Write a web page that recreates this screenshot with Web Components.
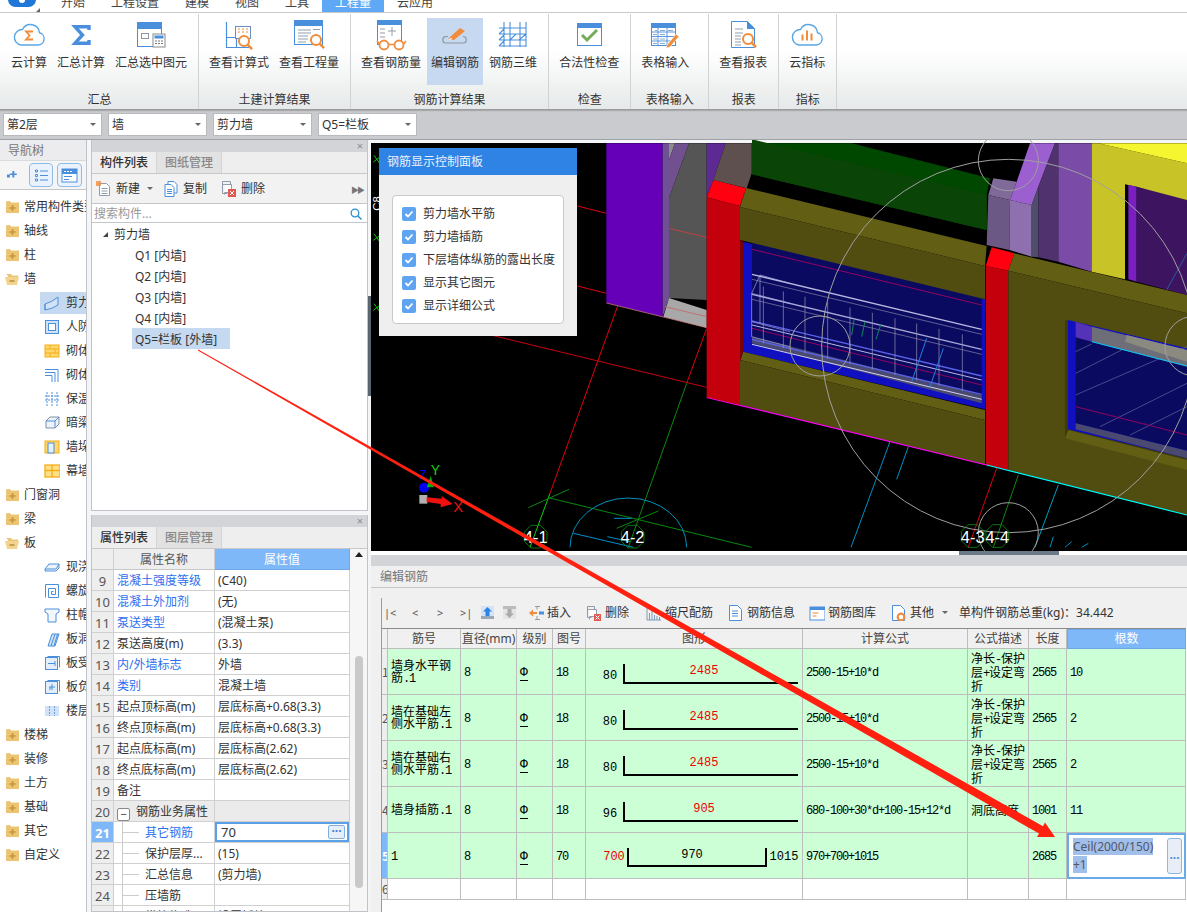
<!DOCTYPE html>
<html lang="zh">
<head>
<meta charset="utf-8">
<title>钢筋编辑</title>
<style>
html, body { margin: 0; height: 100%; overflow: hidden; background: #f4f5f6; }
body { font: 12px/16px "Noto Sans", "Noto Sans CJK SC", sans-serif; color: #333; }
</style>
</head>
<body>
<gtj-app></gtj-app>
<red-arrow></red-arrow>
<script>
const BLUE = "#4a8fdc";
const ORANGE = "#f08c3c";
const magnifier = (x, y) => `<circle cx="${x}" cy="${y}" r="5" fill="#fff" stroke="${ORANGE}" stroke-width="2"/><path d="M${x + 3.6} ${y + 3.6}l4.5 4.5" stroke="${ORANGE}" stroke-width="2.6"/>`;
const titled = (x, y, w, h, bar) => `<rect x="${x + .5}" y="${y + .5}" width="${w - 1}" height="${h - 1}" fill="#fff" stroke="${BLUE}"/><rect x="${x}" y="${y}" width="${w}" height="${bar}" fill="${BLUE}"/>`;

// 功能区图标 (36x36)
const ribbonIcons = {
  cloudSum: `<path d="M10 27h17a6.2 6.2 0 0 0 1.5-12.2A9 9 0 0 0 11.5 11.5 7.8 7.8 0 0 0 10 27z" fill="#fff" stroke="#5aa7e6" stroke-width="1.4"/><path d="M22 13.5h-7l3.6 4-3.6 4h7" fill="none" stroke="${ORANGE}" stroke-width="1.8"/>`,
  sum: `<path d="M26 12V8.8H12l7.5 8.2-7.5 8.2h14V22" fill="none" stroke="${BLUE}" stroke-width="3.4"/>`,
  sumSel: `${titled(4, 4, 25, 25, 7)}<rect x="8.500" y="15.500" width="7" height="5" fill="none" stroke="#8a97a8"/><rect x="20" y="16" width="12" height="13" fill="#fff" stroke="#8a8a8a"/><rect x="21.500" y="17.500" width="9" height="3" fill="${BLUE}"/><path d="M22 23h2m1 0h2m1 0h2M22 25.500h2m1 0h2m1 0h2" stroke="#777"/>`,
  viewCalc: `<path d="M5.500 4v25.500h23M5.500 19.500h10v10" fill="none" stroke="${BLUE}" stroke-width="1.2"/><rect x="14.500" y="8.500" width="15" height="12" fill="#fff" stroke="#6a8fc0"/><path d="M17 11h2m2 0h2m2 0h2M17 14h2m2 0h2m2 0h2" stroke="${ORANGE}"/>${magnifier(23, 23)}`,
  viewQty: `${titled(3, 2, 29, 25, 6)}<path d="M7 12h13M7 15h13M7 18h10M7 21h10M7 24h8" stroke="#8f9dac"/><rect x="22" y="11" width="7" height="1" fill="#8f9dac"/>${magnifier(25, 22)}`,
  viewRebar: `${titled(4, 2, 25, 25, 5)}<path d="M7 11h5M7 15h5M7 19h5M15 13h8M19 9v9" stroke="#8f9dac"/><circle cx="11" cy="27" r="4.500" fill="#fff" stroke="${ORANGE}" stroke-width="1.8"/><circle cx="26" cy="27" r="4.500" fill="#fff" stroke="${ORANGE}" stroke-width="1.8"/><path d="M15.500 26.500h6M6.500 26l-2.500-3M30.500 26l2.500-3" stroke="${ORANGE}" stroke-width="1.6" fill="none"/>`,
  editRebar: `<path d="M11 18.500H9a3 3 0 0 0 0 6.500h17a3 3 0 0 0 0-6.500" fill="none" stroke="#8e959c" stroke-width="1.2"/><path d="M11 21l12-11 5 3-11 9z" fill="${ORANGE}"/><path d="M12 21.500l3-1" stroke="#fff"/>`,
  rebar3d: `<path d="M9 4v25M15 4v25M25 4v25M31 4v25M4 10h27M4 16h5M4 22h27M4 28h27M4 16l6-6M4 22l6-6M4 28l6-6M9 16h22M15 22l6-6M24 22l7-6" fill="none" stroke="${BLUE}" stroke-width="1.1"/>`,
  check: `${titled(6, 5, 25, 23, 5)}<path d="M11 17l5 5 10-10" fill="none" stroke="#74ac58" stroke-width="3"/>`,
  tableInput: `${titled(4, 5, 25, 23, 5)}<path d="M4 14h25M4 18.500h25M4 23h25M11 10v18M20 10v18" stroke="${BLUE}" stroke-width=".9"/><path d="M8 12.500h2m3 0h5m3 0h5M6 16.500h4m3 0h5M6 21h4m3 0h5M6 25.500h4m3 0h5" stroke="#8fa9c8"/><path d="M20 27l9-11 3 2.400-9 10.600-4 1z" fill="${ORANGE}" stroke="#fff" stroke-width=".6"/>`,
  report: `<path d="M6.500 3.500h16l7 7v19h-23z" fill="#fff" stroke="${BLUE}"/><path d="M22 3v8h8z" fill="${BLUE}"/><path d="M10 11h8M10 15h8M10 18h6M10 21h6M10 24h6M10 27h6" stroke="#8f9dac"/>${magnifier(23, 21)}`,
  cloudBars: `<path d="M10 27h17a6.2 6.2 0 0 0 1.500-12.200A9 9 0 0 0 11.500 11.500 7.800 7.800 0 0 0 10 27z" fill="#fff" stroke="#5aa7e6" stroke-width="1.4"/><path d="M13.500 22.500v-6M18 22.500v-10M22.500 22.500v-7" stroke="${ORANGE}" stroke-width="2"/>`,
};

// 导航树图标 (16x16)
const folder = (open) => `<svg width="15" height="14" viewBox="0 0 15 14"><path d="${open ? "M1 2h5l1 1.500h6V6H4L1 1z" : "M1 2.500Q1 1 2 1h3l1 1.500h8V13H1z"}" fill="#ecc476"/>${open ? `<path d="M0 5h14l-2 8H2z" fill="#f3d48e"/><path d="M4.500 9h5" stroke="#b88d3a" stroke-width="1.500"/>` : `<path d="M7.500 5v6M4.500 8h6" stroke="#c89436" stroke-width="1.600"/>`}</svg>`;
const navIcons = {
  wall: `<path d="M1 9Q8 7 14 2v8Q8 14 1 15z" fill="#d2e3f7" stroke="${BLUE}"/><path d="M1 9v6" stroke="${BLUE}"/>`,
  frame: `<rect x="1.500" y="1.500" width="13" height="13" fill="#cfe2f7" stroke="${BLUE}"/><rect x="4.500" y="4.500" width="7" height="7" fill="#fff" stroke="${BLUE}"/>`,
  brick: `<rect x="1" y="2" width="14" height="12" fill="#ffd76e" stroke="#f5ad14"/><path d="M1 6h14M1 10h14M6 2v4M11 6v4M6 10v4" stroke="#f5ad14"/>`,
  corner: `<path d="M1 2.500h13V15M1 5.500h10V15M1 8.500h7V15" fill="none" stroke="${BLUE}"/>`,
  insul: `<path d="M3 1v14M8 1v14M13 1v14M1 5h14M1 9h14" stroke="${BLUE}" stroke-dasharray="2 1"/>`,
  beam: `<path d="M2 6l4-4h9v7l-4 4H2z" fill="#eef3f9" stroke="#7f8fa5"/><path d="M2 6h9l4-4M11 6v7" fill="none" stroke="${BLUE}"/>`,
  pier: `<rect x="1" y="2" width="14" height="12" fill="#ffd76e" stroke="#f5ad14"/><rect x="4" y="4" width="6" height="10" fill="#e6f0fb" stroke="${BLUE}"/>`,
  curtain: `<rect x="1" y="2" width="15" height="12" fill="#ffe08a" stroke="#f5ad14" stroke-width="1.300"/><path d="M1 7.500h15M8 2v12" stroke="#f5ad14" stroke-width="1.300"/>`,
  slab: `<path d="M1 10l4-5h10v4l-3 3H1z" fill="#eef3f9" stroke="${BLUE}"/><path d="M1 10h11l3-5" fill="none" stroke="${BLUE}"/>`,
  spiral: `<path d="M1.500 14.500v-13h13v13H4.500v-9h7v6H7.500v-3h2" fill="none" stroke="${BLUE}"/>`,
  cap: `<path d="M1 2h14v3l-3 2v8H4V7L1 5z" fill="#f2f7fc" stroke="${BLUE}"/>`,
  hole: `<path d="M4 15L8 3h7l-4 12zM7 15l4-12M10 15l3.500-12" fill="#cfe2f7" stroke="${BLUE}"/>`,
  slabBar: `<rect x="1.500" y="2.500" width="12" height="12" fill="#e3eefa" stroke="${BLUE}"/><path d="M3.500 1.500h12v11M4 8.500h7M11 6v5" fill="none" stroke="${BLUE}"/>`,
  slabNeg: `<rect x="1.500" y="2.500" width="12" height="12" fill="#e3eefa" stroke="${BLUE}"/><path d="M3.500 1.500h12v11M5 8h6M8 5v6M6 11V8" fill="none" stroke="${BLUE}"/>`,
  strip: `<rect x="1" y="3" width="14" height="10" fill="#cfe2f7"/><path d="M5.500 3v10M10.500 3v10" stroke="#6fa1d8" stroke-dasharray="2 1"/>`,
};

class RibbonItem extends HTMLElement {
  connectedCallback() {
    this.attachShadow({ mode: "open" });
    this.shadowRoot.innerHTML = `<style>
:host { display: flex; flex-direction: column; align-items: center; padding: 0 4px; margin: 0 1px; height: 67px; }
:host([active]) { background: #c7d9f0; }
svg { width: 36px; height: 36px; display: block; overflow: visible; flex: none; }
span { line-height: 16px; white-space: nowrap; color: #333; margin-top: 1px; }
</style><svg viewBox="0 0 36 36">${ribbonIcons[this.getAttribute("icon")]}</svg><span>${this.getAttribute("label")}</span>`;
  }
}

class RibbonGroup extends HTMLElement {
  connectedCallback() {
    this.attachShadow({ mode: "open" });
    this.shadowRoot.innerHTML = `<style>
:host { display: flex; flex-direction: column; align-items: stretch; box-sizing: content-box; padding: 0 6px 0 5px; border-right: 1px solid #d0d3d6; height: 95px; margin-top: 1px; }
.items { display: flex; padding-top: 4px; }
.label { text-align: center; line-height: 16px; margin-top: 7px; color: #333; margin-left: -5px; margin-right: -6px; }
</style><div class="items"><slot></slot></div><div class="label">${this.getAttribute("label")}</div>`;
  }
}

class AppRibbon extends HTMLElement {
  connectedCallback() {
    this.attachShadow({ mode: "open" });
    const tabs = ["开始", "工程设置", "建模", "视图", "工具", "工程量", "云应用"];
    this.shadowRoot.innerHTML = `<style>
:host { display: block; }
.tabs { display: flex; height: 12px; border-bottom: 1px solid #c8cacc; overflow: hidden; background: #fff; padding-left: 48px; position: relative; }
.tab { padding: 0 13px; line-height: 6px; height: 12px; color: #444; }
.tab.on { background: #5ea8f5; color: #fff; }
.logo { position: absolute; left: 8px; top: -8px; width: 28px; height: 15px; background: #1f78d8; border-radius: 8px; }
.logo::after { content: ""; position: absolute; left: 11px; top: 5px; width: 6px; height: 6px; border-radius: 3px; background: #fff; }
.corner { position: absolute; left: 36px; top: 8px; border: 2px solid transparent; border-right-color: #666; border-bottom-color: #666; }
.mask { position: absolute; left: 0; top: 0; width: 45px; height: 13px; background: #fff; }
.bar { display: flex; height: 97px; box-sizing: border-box; background: linear-gradient(#fff 40%, #e6e9e9); border-bottom: 1px solid #9a9c9e; box-shadow: 0 1px 1px #aaa; position: relative; }
</style>
<div class="tabs"><div class="mask"></div><div class="logo"></div><div class="corner"></div>${tabs.map((t) => `<div class="tab${t === "工程量" ? " on" : ""}">${t}</div>`).join("")}</div>
<div class="bar">
  <ribbon-group label="汇总" style="padding-left:6px">
    <ribbon-item icon="cloudSum" label="云计算"></ribbon-item>
    <ribbon-item icon="sum" label="汇总计算"></ribbon-item>
    <ribbon-item icon="sumSel" label="汇总选中图元"></ribbon-item>
  </ribbon-group>
  <ribbon-group label="土建计算结果">
    <ribbon-item icon="viewCalc" label="查看计算式"></ribbon-item>
    <ribbon-item icon="viewQty" label="查看工程量"></ribbon-item>
  </ribbon-group>
  <ribbon-group label="钢筋计算结果">
    <ribbon-item icon="viewRebar" label="查看钢筋量"></ribbon-item>
    <ribbon-item icon="editRebar" label="编辑钢筋" active></ribbon-item>
    <ribbon-item icon="rebar3d" label="钢筋三维"></ribbon-item>
  </ribbon-group>
  <ribbon-group label="检查">
    <ribbon-item icon="check" label="合法性检查"></ribbon-item>
  </ribbon-group>
  <ribbon-group label="表格输入" style="width:66px">
    <ribbon-item icon="tableInput" label="表格输入"></ribbon-item>
  </ribbon-group>
  <ribbon-group label="报表">
    <ribbon-item icon="report" label="查看报表"></ribbon-item>
  </ribbon-group>
  <ribbon-group label="指标">
    <ribbon-item icon="cloudBars" label="云指标"></ribbon-item>
  </ribbon-group>
</div>`;
  }
}

class FloorSelect extends HTMLElement {
  connectedCallback() {
    this.attachShadow({ mode: "open" });
    this.shadowRoot.innerHTML = `<style>
:host { display: flex; align-items: center; justify-content: space-between; box-sizing: border-box; width: 99px; height: 23px; background: #fff; border: 1px solid #b8babd; padding: 0 5px 0 3px; font-size: 12px; color: #333; }
i { width: 0; height: 0; border: 3.500px solid transparent; border-top: 3.500px solid #666; border-bottom: 0; }
</style><slot></slot><i></i>`;
  }
}

class SelectBar extends HTMLElement {
  connectedCallback() {
    this.attachShadow({ mode: "open" });
    this.shadowRoot.innerHTML = `<style>
:host { display: flex; gap: 6px; height: 30px; box-sizing: border-box; padding: 3px 0 0 3px; background: #c9cbcf; border-bottom: 1px solid #9ea1a5; }
</style><floor-select>第2层</floor-select><floor-select>墙</floor-select><floor-select>剪力墙</floor-select><floor-select>Q5=栏板</floor-select>`;
  }
}

class NavTree extends HTMLElement {
  connectedCallback() {
    this.attachShadow({ mode: "open" });
    const rows = [
      [0, "常用构件类型"], [0, "轴线"], [0, "柱"], [1, "墙"],
      [2, "剪力墙", "wall", true], [2, "人防门框墙", "frame"], [2, "砌体墙", "brick"], [2, "砌体加筋", "corner"], [2, "保温墙", "insul"], [2, "暗梁", "beam"], [2, "墙垛", "pier"], [2, "幕墙", "curtain"],
      [0, "门窗洞"], [0, "梁"], [1, "板"],
      [2, "现浇板", "slab"], [2, "螺旋板", "spiral"], [2, "柱帽", "cap"], [2, "板洞", "hole"], [2, "板受力筋", "slabBar"], [2, "板负筋", "slabNeg"], [2, "楼层板带", "strip"],
      [0, "楼梯"], [0, "装修"], [0, "土方"], [0, "基础"], [0, "其它"], [0, "自定义"],
    ];
    const rowHtml = ([kind, text, icon, sel]) => kind === 2
      ? `<div class="row child${sel ? " sel" : ""}"><svg width="16" height="16" viewBox="0 0 16 16">${navIcons[icon]}</svg><span>${text}</span></div>`
      : `<div class="row">${folder(kind === 1)}<span>${text}</span></div>`;
    this.shadowRoot.innerHTML = `<style>
:host { display: flex; flex-direction: column; background: #fff; border-right: 1px solid #c0c4c8; overflow: hidden; }
.head { height: 20px; line-height: 21px; background: #ececee; color: #777; padding-left: 8px; flex: none; }
.tools { height: 30px; box-sizing: border-box; background: #f5f5f6; border-bottom: 1px solid #c4c6c9; border-top: 1px solid #d8dade; display: flex; align-items: center; padding-left: 5px; flex: none; }
.btn { width: 25px; height: 24px; box-sizing: border-box; border: 1px solid #8ebce8; border-radius: 4px; background: #eaf3fd; margin-right: 4px; display: flex; align-items: center; justify-content: center; }
.list { padding-top: 5px; white-space: nowrap; }
.row { height: 24px; display: flex; align-items: center; padding-left: 5px; gap: 4px; }
.row svg { flex: none; }
.child { margin-left: 40px; padding-left: 4px; gap: 6px; }
.sel { background: #c5d9f0; height: 22px; margin-top: 1px; margin-bottom: 1px; }
</style>
<div class="head">导航树</div>
<div class="tools">
  <svg width="12" height="12" viewBox="0 0 12 12" style="margin-right:12px"><path d="M2 5.500h3v3H2zM7.500 2h2v2.500h2.500v1.500h-2.500v2.500h-2v-2.500h-2.500v-1.500h2.500z" fill="${BLUE}"/></svg>
  <div class="btn"><svg width="15" height="15" viewBox="0 0 15 15"><path d="M1.500 2h2v2h-2zM1.500 6.500h2v2h-2zM1.500 11h2v2h-2zM6 3h8M6 7.500h8M6 12h8" fill="none" stroke="${BLUE}"/></svg></div>
  <div class="btn"><svg width="17" height="15" viewBox="0 0 17 15"><rect x="1" y="1" width="15" height="13" fill="#fff" stroke="${BLUE}"/><rect x="1" y="1" width="15" height="5" fill="${BLUE}"/><path d="M3 8.500h8M3 11.500h5" stroke="${BLUE}"/><path d="M3 3.500h2m1 0h2m1 0h2" stroke="#fff"/></svg></div>
</div>
<div class="list">${rows.map(rowHtml).join("")}</div>`;
  }
}

class DockPanel extends HTMLElement {
  connectedCallback() {
    this.attachShadow({ mode: "open" });
    const [on, off] = this.getAttribute("tabs").split(",");
    this.shadowRoot.innerHTML = `<style>
:host { display: flex; flex-direction: column; box-sizing: border-box; border: 1px solid #c0c4c8; border-top: 0; background: #fff; overflow: hidden; }
.strip { height: 12px; background: #d2d4d8; text-align: right; line-height: 11px; padding-right: 4px; color: #8a8c90; font-size: 11px; flex: none; }
.tabs { display: flex; height: 22px; box-sizing: border-box; background: #eeeeee; border-bottom: 1px solid #c8c8c8; flex: none; }
.tab { width: 65px; box-sizing: border-box; text-align: center; line-height: 21px; border-right: 1px solid #d4d4d4; font-weight: 500; color: #333; }
.tab + .tab { background: #e2e2e2; color: #888; }
</style><div class="strip">×</div><div class="tabs"><div class="tab">${on}</div><div class="tab">${off}</div></div><slot></slot>`;
  }
}

class ComponentList extends HTMLElement {
  connectedCallback() {
    this.attachShadow({ mode: "open" });
    const items = ["Q1 [内墙]", "Q2 [内墙]", "Q3 [内墙]", "Q4 [内墙]", "Q5=栏板 [外墙]"];
    this.shadowRoot.innerHTML = `<style>
:host { display: flex; flex-direction: column; flex: 1; min-height: 0; }
.tools { height: 30px; box-sizing: border-box; background: #f2f2f2; border-bottom: 1px solid #c4c6c9; display: flex; align-items: center; padding-left: 4px; position: relative; }
.tool { display: flex; align-items: center; gap: 5px; }
.caret { width: 0; height: 0; border: 3px solid transparent; border-top-color: #666; border-bottom: 0; margin: 0 11px 0 7px; }
.more { position: absolute; right: 4px; top: 8px; color: #777; font-size: 8px; letter-spacing: -2px; }
.search { height: 19px; box-sizing: border-box; border-bottom: 1px solid #c4c6c9; display: flex; align-items: center; justify-content: space-between; padding: 1px 5px 0 2px; color: #999; line-height: 18px; }
.root { height: 21px; box-sizing: border-box; padding: 2px 0 0 11px; display: flex; align-items: center; gap: 6px; }
.root i { width: 0; height: 0; border-left: 5px solid transparent; border-bottom: 5px solid #444; }
.item { height: 21px; line-height: 23px; margin-left: 40px; padding-left: 3px; white-space: nowrap; width: fit-content; padding-right: 10px; }
.item.sel { width: 95px; padding-right: 0; background: #c5d9f0; }
</style>
<div class="tools">
  <span class="tool"><svg width="15" height="16" viewBox="0 0 15 16"><path d="M3.500 2.500h7l3 3v9h-10z" fill="#fff" stroke="#8f9dac"/><path d="M5.500 7.500h6M5.500 10h6M5.500 12.500h6" stroke="#8f9dac"/><path d="M0 0h5v5H0z" fill="${ORANGE}" opacity=".8"/></svg>新建</span><i class="caret"></i>
  <span class="tool" style="margin-right:14px"><svg width="14" height="16" viewBox="0 0 14 16"><path d="M4 .500h6l3 3V12H4z" fill="#fff" stroke="${BLUE}"/><path d="M1 3.500h6l3 3v9H1z" fill="#fff" stroke="${BLUE}"/><path d="M3 8.500h5M3 10.500h5M3 12.500h5" stroke="${BLUE}"/></svg>复制</span>
  <span class="tool"><svg width="15" height="16" viewBox="0 0 15 16"><path d="M1.500 .500h8v3h-8zM1.500 .500v12h5" fill="none" stroke="#8f9dac"/><path d="M3.500 3.500h7v8h-7v2" fill="#fff" stroke="#8f9dac"/><rect x="7" y="8" width="8" height="8" fill="#e05a52"/><path d="M9 10l4 4m0-4l-4 4" stroke="#fff"/></svg>删除</span>
  <span class="more">▶▶</span>
</div>
<div class="search"><span>搜索构件...</span><svg width="12" height="12" viewBox="0 0 12 12"><circle cx="5" cy="5" r="3.800" fill="none" stroke="#2a8fd0" stroke-width="1.300"/><path d="M8 8l3.500 3.500" stroke="#2a8fd0" stroke-width="1.500"/></svg></div>
<div class="tree"><div class="root"><i></i><span>剪力墙</span></div>${items.map((t, i) => `<div class="item${i === 4 ? " sel" : ""}">${t}</div>`).join("")}</div>`;
  }
}

class PropertyTable extends HTMLElement {
  connectedCallback() {
    this.attachShadow({ mode: "open" });
    const rows = [
      [9, "混凝土强度等级", "(C40)", "link"], [10, "混凝土外加剂", "(无)", "link"], [11, "泵送类型", "(混凝土泵)", "link"],
      [12, "泵送高度(m)", "(3.3)"], [13, "内/外墙标志", "外墙", "link"], [14, "类别", "混凝土墙", "link"],
      [15, "起点顶标高(m)", "层底标高+0.68(3.3)"], [16, "终点顶标高(m)", "层底标高+0.68(3.3)"],
      [17, "起点底标高(m)", "层底标高(2.62)"], [18, "终点底标高(m)", "层底标高(2.62)"], [19, "备注", ""],
      [20, "钢筋业务属性", "", "group"], [21, "其它钢筋", "70", "edit"], [22, "保护层厚...", "(15)", "child"],
      [23, "汇总信息", "(剪力墙)", "child"], [24, "压墙筋", "", "child"], [25, "纵筋构造", "设置插筋", "child"],
    ];
    const nameCell = (name, kind) => {
      if (kind === "group") return `<span class="box">−</span>${name}`;
      if (kind === "edit") return `<span class="tee"></span><span class="link">${name}</span>`;
      if (kind === "child") return `<span class="tee"></span>${name}`;
      return kind === "link" ? `<span class="link">${name}</span>` : name;
    };
    const valueCell = (value, kind) => kind === "edit"
      ? `<div class="edit"><span>${value}</span><b>···</b></div>` : value;
    this.shadowRoot.innerHTML = `<style>
:host { display: flex; flex: 1; min-height: 0; overflow: hidden; }
table { border-collapse: separate; border-spacing: 0; table-layout: fixed; width: 258px; flex: none; align-self: flex-start; }
th, td { height: 18px; padding: 2px 0 0 3px; border-right: 1px solid #d0d0d0; border-bottom: 1px solid #d0d0d0; font-weight: 400; white-space: nowrap; overflow: hidden; line-height: 18px; box-sizing: content-box; }
th { background: #eeeeee; text-align: center; color: #555; padding-left: 0; border-bottom-color: #c8c8c8; }
th.on { background: #7eb8f8; color: #fff; border: 1px solid #6ea8e8; border-width: 0 1px 1px 0; }
td.n { background: #eeeeee; text-align: center; padding-left: 0; color: #555; font-size: 13px; }
td.n.on { background: #7eb8f8; color: #fff; font-weight: 700; }
.link { color: #2e6ff0; }
tr.group td { background: #ebebeb; }
.box { display: inline-block; box-sizing: border-box; width: 13px; height: 13px; line-height: 10px; text-align: center; border: 1px solid #888; border-radius: 2px; margin-right: 6px; vertical-align: -2px; background: #fff; font-size: 11px; }
.tee { display: inline-block; position: relative; width: 28px; height: 18px; vertical-align: top; }
.tee::before { content: ""; position: absolute; left: 5px; top: -4px; bottom: -2px; border-left: 1px solid #ccc; }
.tee::after { content: ""; position: absolute; left: 6px; width: 16px; top: 8px; border-top: 1px solid #ccc; }
td.e { padding: 0; height: 20px; }
.edit { display: flex; align-items: center; justify-content: space-between; height: 20px; box-sizing: border-box; border: 2px solid #5aa0e8; padding: 0 2px 0 4px; font-size: 13px; background: #fff; }
.edit b { width: 15px; height: 12px; line-height: 9px; border: 1px solid #7eb0e4; border-radius: 2px; background: #e8eef8; text-align: center; color: #3a7fd0; font-size: 12px; }
.scroll { flex: 1; position: relative; background: #f6f6f7; }
.up { position: absolute; left: 5px; top: 3px; width: 0; height: 0; border: 4px solid transparent; border-top: 0; border-bottom: 5px solid #222; }
.thumb { position: absolute; left: 5px; width: 8px; top: 107px; height: 232px; background: #c9c9c9; border-radius: 4px; }
</style>
<table><colgroup><col style="width:22px"><col style="width:101px"><col style="width:135px"></colgroup>
<tr><th></th><th>属性名称</th><th class="on">属性值</th></tr>
${rows.map(([n, name, value, kind]) => `<tr class="${kind === "group" ? "group" : ""}"><td class="n${kind === "edit" ? " on" : ""}">${n}</td><td>${nameCell(name, kind)}</td><td class="${kind === "edit" ? "e" : "v"}">${valueCell(value, kind)}</td></tr>`).join("")}
</table><div class="scroll"><i class="up"></i><i class="thumb"></i></div>`;
  }
}

class DisplayPanel extends HTMLElement {
  connectedCallback() {
    this.attachShadow({ mode: "open" });
    const opts = ["剪力墙水平筋", "剪力墙插筋", "下层墙体纵筋的露出长度", "显示其它图元", "显示详细公式"];
    this.shadowRoot.innerHTML = `<style>
:host { position: absolute; left: 8px; top: 8px; width: 198px; height: 188px; background: #efefef; display: flex; flex-direction: column; }
.title { height: 27px; line-height: 27px; background: #2e83e4; color: #e8f2ff; padding-left: 8px; flex: none; }
.body { margin: 20px 13px 12px 13px; flex: 1; background: #fff; border: 1px solid #c9c9c9; border-radius: 4px; display: flex; flex-direction: column; justify-content: center; padding-left: 9px; }
label { display: flex; align-items: center; height: 23px; gap: 7px; color: #333; white-space: nowrap; }
.c { width: 14px; height: 14px; border-radius: 2px; background: #5ea4f0; display: flex; align-items: center; justify-content: center; }
</style><div class="title">钢筋显示控制面板</div><div class="body">${opts.map((t) => `<label><span class="c"><svg width="10" height="10" viewBox="0 0 10 10"><path d="M1.500 5l2.500 2.500 4.500-5" fill="none" stroke="#fff" stroke-width="1.800"/></svg></span>${t}</label>`).join("")}</div>`;
  }
}

class ModelView extends HTMLElement {
  connectedCallback() {
    this.attachShadow({ mode: "open" });
    const poly = (pts, fill) => `<polygon points="${pts}" fill="${fill}"/>`;
    const line = (x1, y1, x2, y2, c, w = 3) => `<line x1="${x1}" y1="${y1}" x2="${x2}" y2="${y2}" stroke="${c}" stroke-width="${w}"/>`;
    const vbars = [-80, -20, 45, 113, 180, 247, 315, 380, 447, 517].map((x) => line(x, 470 + (x - 45) * .24, x, 640 + (x - 45) * .24, "#9a9ab8", 2)).join("");
    const barY = [[430, "#b8b8e0", 4], [445, "#8a8ab0", 2], [490, "#a8a8d8", 4], [505, "#8a8ab0", 2], [570, "#5a62e8", 4], [582, "#b8b8e8", 3], [625, "#5a62e8", 4], [640, "#d0d0f0", 3]]
      .map(([y, c, w]) => line(-114, y - 27, 575, y + 138, c, w)).join("");
    const hatch = [[857, 635, 905, 612], [857, 700, 1005, 625], [857, 765, 1191, 620], [930, 860, 1191, 730], [1020, 885, 1191, 800]]
      .map(([a, b, c, d]) => line(a, b, c, d, "#6a6aa8", 2)).join("");
    const oct = (x, y) => `<polygon points="${x - 34},${y - 14} ${x - 14},${y - 34} ${x + 14},${y - 34} ${x + 34},${y - 14} ${x + 34},${y + 14} ${x + 14},${y + 34} ${x - 14},${y + 34} ${x - 34},${y + 14}" fill="none" stroke="#0a8a10" stroke-width="2.500"/>`;
    const label = (x, t) => `<text x="${x}" y="1208" fill="#fff" font-family="Liberation Sans, sans-serif" font-size="49" text-anchor="middle">${t}</text>`;
    this.shadowRoot.innerHTML = `<style>
:host { display: block; height: 411px; position: relative; overflow: hidden; background: #f5f6f7; flex: none; }
svg { display: block; width: 816px; height: 411px; }
</style>
<svg viewBox="371 140 816 411">
<rect x="371" y="143" width="816" height="408"/>
<g transform="translate(370 140) scale(.33333)">
  ${line(622, 198, 709, 220, "#e00010")}${line(622, 438, 709, 460, "#e00010")}${line(370, 587, 1010, 742, "#c80010")}
  ${line(743, 498, 540, 1060, "#e00010")}${line(540, 1060, 480, 1222, "#10d010")}${line(1010, 565, 950, 730, "#e00010")}${line(950, 730, 775, 1222, "#0a8a10")}
  ${line(475, 1103, 597, 1048, "#0a8a10")}${line(535, 1073, 1145, 1222, "#0a8a10")}${line(740, 1165, 865, 1113, "#0a8a10")}
  ${line(610, 1180, 790, 1222, "#0090c8")}${line(732, 1135, 785, 1135, "#0090c8")}${line(712, 1190, 780, 1205, "#0090c8")}
  <path d="M600 1222A175 148 0 0 1 950 1222" fill="none" stroke="#0090c0" stroke-width="3"/>
  ${oct(497, 1190)}${oct(788, 1190)}${label(497, "4-1")}${label(788, "4-2")}
  ${poly("709,10 878,10 878,530 709,488", "#6600b8")}
  ${poly("878,10 897,10 897,474 878,530", "#6f4f96")}
  ${poly("897,10 915,10 897,60", "#8c8c8c")}
  ${poly("915,10 957,10 897,175 897,60", "#70508f")}
  ${poly("957,10 1010,10 1010,480 897,474 897,175", "#555555")}
  ${poly("897,474 1010,510 1010,563 880,530", "#a8a8a8")}
  ${poly("1010,10 1067,10 1030,120 1010,170", "#5c2a92")}
  ${poly("1067,10 1145,10 1145,100 1130,145 1030,120", "#5f5050")}
  ${line(897, 265, 1010, 292, "#c04040")}${line(885, 500, 1010, 530, "#c07070")}
  ${line(709, 489, 1010, 563, "#e89090", 2)}
  <text x="10" y="210" fill="#fff" font-family="Liberation Sans, sans-serif" font-size="34" transform="rotate(-90 22 200)">C8</text>
  ${[60, 295, 505].map((y) => `<path d="M12 ${y - 14}l20 28M10 ${y + 6}l24-18" stroke="#10c010" stroke-width="3"/>`).join("")}
  <rect x="148" y="1065" width="24" height="26" fill="#b0b0b0"/><circle cx="162" cy="1043" r="15" fill="#0000f0"/>
  <polygon points="182,1008 170,1042 192,1042" fill="#00b000"/><polygon points="170,1072 215,1076 215,1068 248,1092 212,1102 212,1092 170,1086" fill="#f01010"/>
  <text x="182" y="1005" font-size="42" fill="#10d010" font-family="Liberation Sans, sans-serif">Y</text>
  <text x="148" y="1018" font-size="36" fill="#0000f0" font-family="Liberation Sans, sans-serif">Z</text>
  <text x="250" y="1116" font-size="44" fill="#f01010" font-family="Liberation Sans, sans-serif">X</text>
</g>
<g transform="translate(790 140) scale(.33333)">
  ${poly("-114,10 185,10 600,115 590,165 590,270 -114,103", "#004800")}
  ${poly("-114,-2 590,165 590,270 -114,103", "#0a4406")}
  ${poly("610,115 680,125 660,180 595,165", "#7f6a9a")}${poly("595,165 660,180 658,330 590,315", "#6b5885")}
  ${poly("720,10 795,10 745,140 725,195 660,180 680,125", "#9c5fd0")}${poly("660,180 725,195 725,350 658,330", "#8d70ad")}
  ${poly("725,195 745,140 745,352 725,350", "#4f4d6a")}${poly("745,140 795,10 805,10 805,365 745,352", "#50326f")}
  ${poly("805,10 905,10 905,395 805,365", "#7b4ba8")}
  ${poly("905,10 925,10 1191,70 1191,190 1040,140 1005,133 1005,418 905,395", "#c8c428")}
  ${poly("925,10 1191,10 1191,70", "#f5f530")}
  ${poly("1015,135 1040,140 1040,425 1015,418", "#7a20c0")}${poly("1040,140 1191,180 1191,465 1040,425", "#3d1460")}
  ${line(1191, 340, 1130, 450, "#2080c0", 2)}
  <!-- 左洞口 -->
  ${poly("-141,305 585,478 585,808 -141,635", "#1010c0")}
  ${poly("-114,305 575,470 575,785 -114,610", "#0a0a60")}
  ${poly("-114,590 575,765 575,790 -114,610", "#4a4a70")}
  ${line(-114, 328, 575, 495, "#b00060", 2.500)}${line(-114, 565, 575, 735, "#b00060", 2.500)}
  ${barY}${vbars}
  ${line(410, 595, 365, 725, "#2080e0")}${line(460, 625, 420, 740, "#2080e0")}
  ${line(192, 540, 185, 585, "#0a8a60")}${line(225, 545, 215, 590, "#0a8a60")}${line(272, 555, 258, 598, "#0a8a60")}
  <!-- 梁 -->
  ${poly("-132,144 590,318 585,378 -150,201", "#625e14")}
  ${poly("-150,201 585,378 585,478 -150,300", "#514c0f")}
  ${poly("-150,660 -141,635 585,810 585,840", "#625e14")}
  ${poly("-150,660 585,840 585,975 -150,795", "#514c0f")}
  ${poly("605,322 673,340 655,392 587,378", "#ff0010")}${poly("587,378 655,392 655,990 587,975", "#c4000d")}
  ${poly("673,340 1191,465 1191,520 655,392", "#625e14")}${poly("655,392 1191,520 1191,1125 655,990", "#514c0f")}
  ${poly("825,540 1191,630 1191,960 825,895", "#3f3c0b")}
  ${poly("834,540 1191,625 1191,955 834,868", "#1010c0")}
  ${poly("857,590 1191,672 1191,932 857,850", "#0a0a60")}
  ${hatch}
  ${line(857, 800, 1191, 885, "#b00060", 2.500)}
  ${poly("857,545 905,560 905,605 857,592", "#5533b8")}${poly("905,560 1191,630 1191,680 905,605", "#6e6e78")}${poly("1010,585 1191,630 1191,665 1005,605", "#8a8a80")}
  ${line(905, 605, 1191, 678, "#00c8ff", 3)}
  ${poly("857,850 1191,932 1191,955 857,868", "#4a4a70")}
  ${poly("825,895 835,870 1191,960 1191,990", "#625e14")}
  ${line(300, 905, 183, 1222, "#0090c8")}${line(355, 920, 320, 1018, "#0090c8")}${line(805, 1035, 735, 1222, "#00a0c0")}
  ${line(790, 1190, 780, 1222, "#0090c8")}${line(845, 1205, 825, 1222, "#0090c8")}${line(895, 1210, 875, 1222, "#0090c8")}
  ${line(620, 985, 535, 1222, "#e00010")}${line(685, 1005, 610, 1222, "#0a8a10")}
  ${line(-250, 772, 590, 975, "#ff00ff", 3.500)}${line(590, 975, 1191, 1125, "#00ffff", 3.500)}
  <g fill="none" stroke="#a0a0a0" stroke-width="3"><circle cx="655" cy="618" r="560"/><circle cx="90" cy="618" r="90"/><circle cx="655" cy="62" r="90"/><circle cx="1215" cy="618" r="90"/><circle cx="655" cy="1178" r="90"/></g>
  ${oct(548, 1188)}${oct(622, 1188)}${label(548, "4-3")}${label(622, "4-4")}
</g>
<g transform="translate(370 140) scale(.33333)">
  ${poly("1030,120 1128,145 1110,198 1010,172", "#ff0010")}${poly("1010,172 1110,198 1110,795 1010,772", "#c4000d")}
  ${poly("1110,300 1120,305 1120,635 1110,665", "#7a0008")}
  <path d="M1145 460L1170 405L1260 430M1145 460V590L1260 620M1170 405V550M1145 460L1260 490M1145 545L1260 575" fill="none" stroke="#a8a8e0" stroke-width="2"/>
</g>
</svg>
<display-panel></display-panel>`;
  }
}

class RebarToolbar extends HTMLElement {
  connectedCallback() {
    this.attachShadow({ mode: "open" });
    const doc = `<path d="M1.500 .500h8l4 4v11h-12z" fill="#fff" stroke="${BLUE}"/><path d="M4 6h6M4 8.500h6M4 11h6" stroke="${BLUE}"/>`;
    const tool = (svg, text, ml) => `<span class="t" style="margin-left:${ml}px"><svg width="16" height="16" viewBox="0 0 16 16">${svg}</svg>${text}</span>`;
    this.shadowRoot.innerHTML = `<style>
:host { display: flex; align-items: center; height: 30px; box-sizing: border-box; padding: 0 0 1px 2px; background: #f0f0f0; white-space: nowrap; color: #333; }
.nav { display: inline-block; color: #555; font-size: 11px; }
.t { display: inline-flex; align-items: center; gap: 3px; }
</style>
<span class="nav" style="width:28px">|&lt;</span><span class="nav" style="width:25px">&lt;</span><span class="nav" style="width:23px">&gt;</span><span class="nav" style="width:21px">&gt;|</span>
${tool(`<rect x="0" y="1" width="13" height="13" fill="#d4e4f6"/><rect x="0" y="11" width="13" height="3" fill="#9aa7b5"/><path d="M6.500 2l4.500 4.500H8.500V11h-4V6.500H2z" fill="#2e83e4"/>`, "", 0)}
${tool(`<rect x="0" y="1" width="13" height="13" fill="#e4e4e4"/><rect x="0" y="1" width="13" height="3" fill="#bbb"/><path d="M6.500 13L2 8.500h2.500V4h4v4.500H11z" fill="#aaa"/>`, "", 6)}
${tool(`<path d="M7 1.500h5M7 14.500h5M9 1.500v3M9 11v3.500" stroke="#8f9dac" fill="none"/><path d="M1 8l4-3.500V7h4v2H5v2.500z" fill="${ORANGE}"/><path d="M11 8h5" stroke="${BLUE}" stroke-width="3"/>`, "插入", 9)}
${tool(`<path d="M1.500 1.500h7v3h-7zM1.500 1.500v11h4" fill="none" stroke="#8f9dac"/><path d="M3.500 4.500h7v7h-7v3" fill="#fff" stroke="#8f9dac"/><rect x="8" y="9" width="7" height="7" fill="#e05a52"/><path d="M9.500 10.500l4 4m0-4l-4 4" stroke="#fff"/>`, "删除", 15)}
${tool(`<path d="M1 1v14h14M3.500 8v7M6 5v10M8.500 10v5M11 11v4M13.500 12v3" stroke="#7f9ab8" fill="none"/>`, "缩尺配筋", 17)}
${tool(doc, "钢筋信息", 15)}
${tool(`<rect x="1" y="2" width="15" height="13" fill="#fff" stroke="${BLUE}"/><rect x="1" y="2" width="15" height="3" fill="${BLUE}"/><path d="M3.500 8h6M3.500 11h4" stroke="${ORANGE}"/>`, "钢筋图库", 14)}
${tool(`<path d="M1.500 .500h8l4 4v11h-12z" fill="#fff" stroke="${BLUE}"/><circle cx="10" cy="12" r="3.300" fill="#fff" stroke="${ORANGE}" stroke-width="2.200"/>`, "其他", 15)}
<i style="width:0;height:0;border:3px solid transparent;border-top-color:#666;border-bottom:0;margin:0 11px 0 8px"></i>
<span>单构件钢筋总重(kg)：34.442</span>`;
  }
}

class RebarTable extends HTMLElement {
  connectedCallback() {
    this.attachShadow({ mode: "open" });
    const desc = "净长-保护层+设定弯折";
    const rows = [
      ["墙身水平钢筋.1", "8", "18", [80, 2485], "2500-15+10*d", desc, "2565", "10"],
      ["墙在基础左侧水平筋.1", "8", "18", [80, 2485], "2500-15+10*d", desc, "2565", "2"],
      ["墙在基础右侧水平筋.1", "8", "18", [80, 2485], "2500-15+10*d", desc, "2565", "2"],
      ["墙身插筋.1", "8", "18", [96, 905], "680-100+30*d+100-15+12*d", "洞底高度", "1001", "11"],
      ["1", "8", "70", null, "970+700+1015", "", "2685", null],
    ];
    const ascii = (s) => s.replace(/[\x21-\x7e]+/g, (m) => `<span class="a">${m}</span>`);
    const shape = (data) => {
      const mono = `font-family="Liberation Mono, monospace" font-size="12"`;
      if (!data) {
        return `<svg width="216" height="45"><text x="28" y="27" ${mono} text-anchor="middle" fill="#f00000">700</text><text x="106" y="25" ${mono} text-anchor="middle">970</text><text x="198" y="27" ${mono} text-anchor="middle">1015</text><path d="M42 15v18h138V15" fill="none" stroke="#000" stroke-width="2"/></svg>`;
      }
      return `<svg width="216" height="45"><text x="24" y="30" ${mono} text-anchor="middle">${data[0]}</text><text x="118" y="25" ${mono} text-anchor="middle" fill="#f00000">${data[1]}</text><path d="M38 15v19h174" fill="none" stroke="#000" stroke-width="2"/></svg>`;
    };
    const grade = `<span class="grade">Φ</span>`;
    this.shadowRoot.innerHTML = `<style>
:host { display: block; width: 804px; flex: none; font-family: "Noto Sans CJK SC", sans-serif; }
table { border-collapse: separate; border-spacing: 0; table-layout: fixed; width: 804px; border-top: 1px solid #8a8a8a; }
th, td { padding: 0 0 0 3px; border-right: 1px solid #bdbdbd; border-bottom: 1px solid #bdbdbd; overflow: hidden; font-weight: 400; box-sizing: border-box; }
th { height: 20px; background: #f0f0f0; color: #444; text-align: center; padding: 0; white-space: nowrap; font-family: "Noto Sans", "Noto Sans CJK SC", sans-serif; }
th.on { background: #7eb8f8; color: #fff; border: 1px solid #6ea8e8; }
td { height: 46px; background: #ccffd5; line-height: 12px; color: #000; word-break: break-all; }
td.n { background: #eeeeee; padding: 0; color: #555; text-align: left; white-space: nowrap; }
td.n.on { background: #7eb8f8; color: #fff; font-weight: 700; }
td.s { padding: 0; }
tr.empty td { height: 21px; background: #fff; }
tr.empty td.n { background: #eeeeee; }
.a { font-family: "Liberation Mono", monospace; letter-spacing: -1.200px; }
svg { display: block; overflow: visible; }
.grade { font: 13px/12px "Liberation Mono", monospace; border-bottom: 1px solid #000; }
td.sel { background: #fff; padding: 0; border: 2px solid #6aaae8; }
.sel div { display: flex; justify-content: space-between; height: 42px; padding: 0 2px 0 4px; align-items: center; font: 12px/18px "Noto Sans", sans-serif; color: #566; }
.sel mark { background: #a0bfea; color: #556; }
.sel b { flex: none; width: 15px; height: 36px; box-sizing: border-box; border: 1px solid #8eb6e2; border-radius: 3px; background: #e9edf6; color: #4a90d8; text-align: center; line-height: 32px; font-weight: 700; }
</style>
<table><colgroup>${[6, 73, 56, 36, 33, 217, 165, 61, 38, 119].map((w) => `<col style="width:${w}px">`).join("")}</colgroup>
<tr><th></th><th>筋号</th><th>直径(mm)</th><th>级别</th><th>图号</th><th>图形</th><th>计算公式</th><th>公式描述</th><th>长度</th><th class="on">根数</th></tr>
${rows.map((r, i) => `<tr><td class="n${i === 4 ? " on" : ""}">${i + 1}</td><td>${ascii(r[0])}</td><td>${ascii(r[1])}</td><td>${grade}</td><td>${ascii(r[2])}</td><td class="s">${shape(r[3])}</td><td>${ascii(r[4])}</td><td>${ascii(r[5])}</td><td>${ascii(r[6])}</td>${r[7] ? `<td>${ascii(r[7])}</td>` : `<td class="sel"><div><span><mark>Ceil(2000/150)</mark><br><mark>+1</mark></span><b>...</b></div></td>`}</tr>`).join("")}
<tr class="empty"><td class="n">6</td>${"<td></td>".repeat(9)}</tr>
</table>`;
  }
}

class RebarPanel extends HTMLElement {
  connectedCallback() {
    this.attachShadow({ mode: "open" });
    this.shadowRoot.innerHTML = `<style>
:host { display: flex; flex-direction: column; flex: 1; min-height: 0; background: #fff; overflow: hidden; }
.gap { height: 4px; background: #fff; flex: none; position: relative; }
.handle { position: absolute; left: 588px; width: 100px; height: 4px; background: #6b7885; }
.strip { height: 11px; background: #d2d4d8; flex: none; }
.head { height: 22px; box-sizing: border-box; background: #f0f0f0; border-bottom: 1px solid #c4c6c9; line-height: 21px; padding-left: 9px; color: #777; flex: none; }
.main { flex: 1; display: flex; min-height: 0; background: #f0f0f0; }
.left { width: 10px; flex: none; border-right: 1px solid #9a9c9e; margin-top: 10px; }
.body { flex: 1; min-width: 0; padding-top: 10px; background: linear-gradient(#f0f0f0 10px, #fff 10px); }
</style>
<div class="gap"><i class="handle"></i></div><div class="strip"></div><div class="head">编辑钢筋</div>
<div class="main"><div class="left"></div><div class="body"><rebar-toolbar></rebar-toolbar><rebar-table></rebar-table></div></div>`;
  }
}

class GtjApp extends HTMLElement {
  connectedCallback() {
    this.attachShadow({ mode: "open" });
    this.shadowRoot.innerHTML = `<style>
:host { display: flex; flex-direction: column; width: 1187px; height: 912px; overflow: hidden; }
.main { flex: 1; min-height: 0; display: grid; grid-template-columns: 87px 4px 277px 3px 816px; }
.mid { display: flex; flex-direction: column; gap: 4px; min-height: 0; }
.split { padding-top: 156px; }
.split i { display: block; height: 100px; background: #5a6570; }
.right { display: flex; flex-direction: column; min-height: 0; }
</style>
<app-ribbon></app-ribbon>
<select-bar></select-bar>
<div class="main">
  <nav-tree></nav-tree>
  <div></div>
  <div class="mid">
    <dock-panel tabs="构件列表,图纸管理" style="height:371px"><component-list></component-list></dock-panel>
    <dock-panel tabs="属性列表,图层管理" style="flex:1;min-height:0"><property-table></property-table></dock-panel>
  </div>
  <div class="split"><i></i></div>
  <div class="right"><model-view></model-view><rebar-panel></rebar-panel></div>
</div>`;
  }
}

class RedArrow extends HTMLElement {
  connectedCallback() {
    this.attachShadow({ mode: "open" });
    this.shadowRoot.innerHTML = `<style>
:host { position: absolute; left: 0; top: 0; width: 1187px; height: 912px; pointer-events: none; }
svg { display: block; }
</style><svg width="1187" height="912"><polygon points="198.200,349.600 1043,826.300 1045,822.500 1055,837 1037,837 1039,833.600 197.800,350.400" fill="#ff2010"/></svg>`;
  }
}

customElements.define("ribbon-item", RibbonItem);
customElements.define("ribbon-group", RibbonGroup);
customElements.define("app-ribbon", AppRibbon);
customElements.define("floor-select", FloorSelect);
customElements.define("select-bar", SelectBar);
customElements.define("nav-tree", NavTree);
customElements.define("dock-panel", DockPanel);
customElements.define("component-list", ComponentList);
customElements.define("property-table", PropertyTable);
customElements.define("display-panel", DisplayPanel);
customElements.define("model-view", ModelView);
customElements.define("rebar-toolbar", RebarToolbar);
customElements.define("rebar-table", RebarTable);
customElements.define("rebar-panel", RebarPanel);
customElements.define("gtj-app", GtjApp);
customElements.define("red-arrow", RedArrow);
</script>
</body>
</html>
